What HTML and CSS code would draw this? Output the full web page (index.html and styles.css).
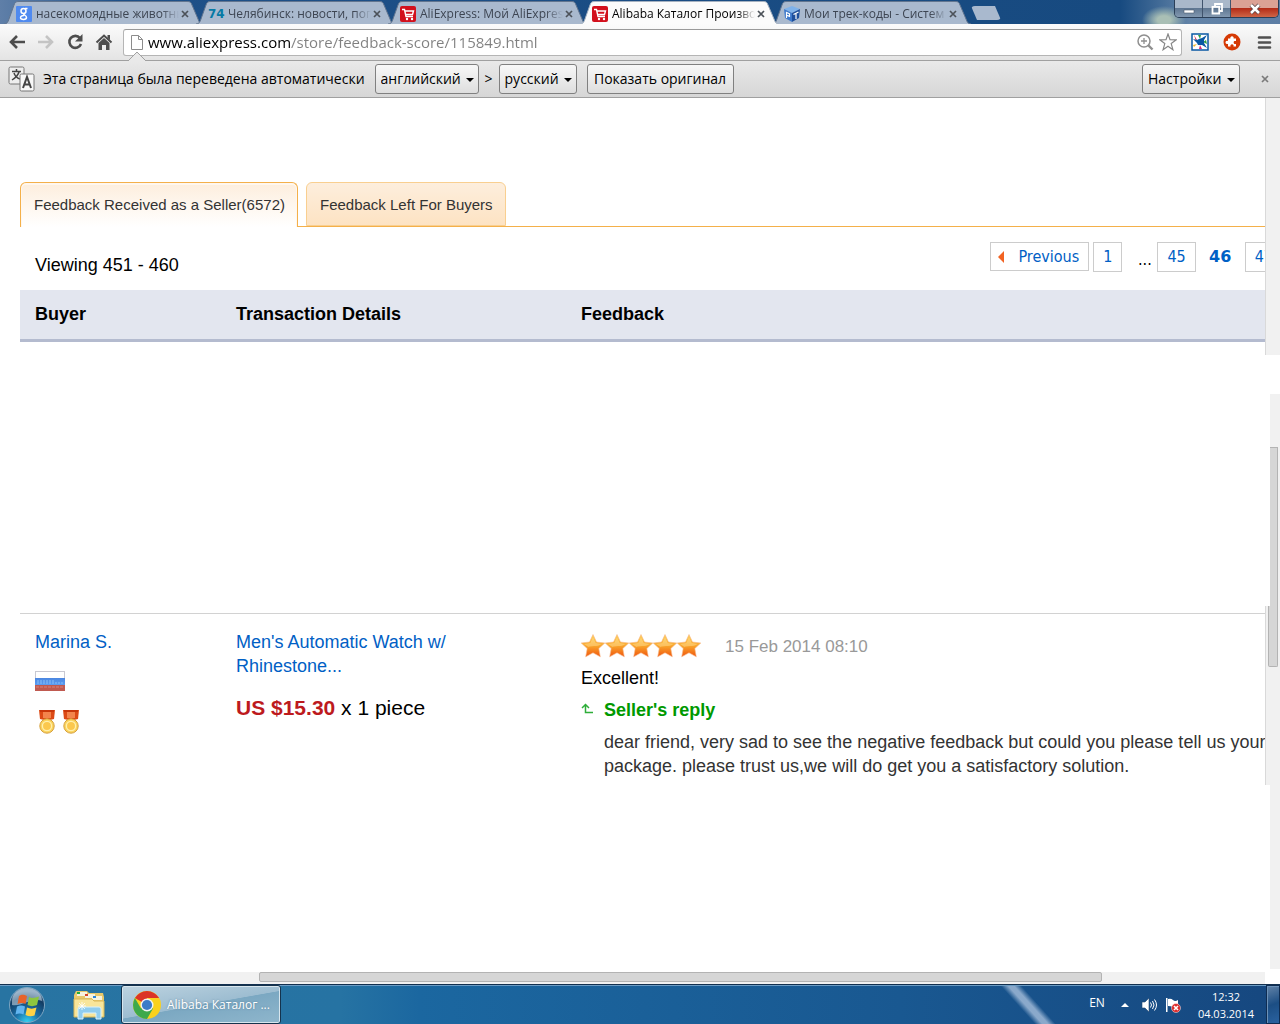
FILE: index.html
```html
<!DOCTYPE html>
<html lang="ru">

<head>
    <meta charset="UTF-8">
    <meta name="viewport" content="width=device-width, initial-scale=1.0">
    <title>Alibaba Каталог</title>
    <link rel="stylesheet" href="styles.css">
</head>

<body>
    <!-- shapes used more than once -->
    <svg class="defs" aria-hidden="true">
        <defs>
            <linearGradient id="starFill" x1="0" y1="0" x2="0" y2="1">
                <stop offset="0" stop-color="#ffd257" />
                <stop offset=".5" stop-color="#f9a62c" />
                <stop offset="1" stop-color="#f0560e" />
            </linearGradient>
            <linearGradient id="flagBlue" x1="0" y1="0" x2="0" y2="1">
                <stop offset="0" stop-color="#4a86e0" />
                <stop offset="1" stop-color="#5c9df2" />
            </linearGradient>
            <radialGradient id="orb" cx=".5" cy="1" r=".9">
                <stop offset="0" stop-color="#35d6f5" />
                <stop offset=".4" stop-color="#1b6fa6" />
                <stop offset=".8" stop-color="#123c63" />
                <stop offset="1" stop-color="#5c7f9f" />
            </radialGradient>
        </defs>
        <symbol id="tabShape" viewBox="0 0 199 24" preserveAspectRatio="none">
            <path d="M0 24 C3 24 4 22 5 19 L10 5 C11 2 12 1.500 15 1.500 H183 C186 1.500 187 2 188 5 L194 19 C195 22 196 24 199 24" />
        </symbol>
        <symbol id="cart" viewBox="0 0 16 16">
            <rect width="16" height="16" rx="2" fill="#d2101c" />
            <path d="M2 3.500h2.500l1.500 7h7M5 5h8.500l-1 3.500H5.700" fill="none" stroke="#fff" stroke-width="1.400" />
            <circle cx="7" cy="13" r="1.200" fill="#fff" />
            <circle cx="12" cy="13" r="1.200" fill="#fff" />
        </symbol>
        <symbol id="cross" viewBox="0 0 8 8">
            <path d="M1 1l6 6M7 1l-6 6" fill="none" stroke="currentColor" stroke-width="1.700" />
        </symbol>
        <symbol id="star" viewBox="0 0 24 24">
            <path d="M12 .500l3.500 7.500 8.300 1-6 5.500 1.500 8.300-7.300-4-7.300 4 1.500-8.300-6-5.500 8.300-1z" fill="url(#starFill)" stroke="#f6b98a" stroke-width=".6" />
            <path d="M12 3l2.700 6 6 .9c-5 3.600-10 .6-16 4L7.500 13 3 10l6.300-1z" fill="#ffe3a0" opacity=".45" />
        </symbol>
        <symbol id="medal" viewBox="0 0 16 24">
            <path d="M0 0h16l-1 9-4 1H5L1 9z" fill="#dc4a15" />
            <path d="M4 2h8v6H4z" fill="#f3844c" />
            <path d="M1 1h14" stroke="#c23208" stroke-width="1.500" />
            <circle cx="8" cy="16" r="7.200" fill="#fbd45c" stroke="#d6a03e" />
            <circle cx="8" cy="16" r="4.600" fill="#fbc84d" stroke="#fff0ae" stroke-width="1.300" />
        </symbol>
    </svg>

    <header class="browser">
        <div class="titlebar">
            <nav class="tabs">
                <div class="tab">
                    <svg class="shape"><use href="#tabShape" /></svg>
                    <svg class="favicon" viewBox="0 0 16 16">
                        <rect width="16" height="16" rx="1" fill="#4f8af0" />
                        <g fill="none" stroke="#fff" stroke-width="1.500">
                            <circle cx="7.500" cy="5" r="2.500" />
                            <path d="M9 2.500h2.500M8.500 7.500C6 9 10.500 9 10.500 11.500S4.500 14 4.500 11.700 8 9.500 8 9.500" />
                        </g>
                    </svg>
                    <a href="#">насекомоядные животны</a>
                    <button class="close" aria-label="Закрыть"><svg><use href="#cross" /></svg></button>
                </div>
                <div class="tab">
                    <svg class="shape"><use href="#tabShape" /></svg>
                    <b class="favicon favicon74">74</b>
                    <a href="#">Челябинск: новости, пог</a>
                    <button class="close" aria-label="Закрыть"><svg><use href="#cross" /></svg></button>
                </div>
                <div class="tab">
                    <svg class="shape"><use href="#tabShape" /></svg>
                    <svg class="favicon"><use href="#cart" /></svg>
                    <a href="#">AliExpress: Мой AliExpress</a>
                    <button class="close" aria-label="Закрыть"><svg><use href="#cross" /></svg></button>
                </div>
                <div class="tab active">
                    <svg class="shape"><use href="#tabShape" /></svg>
                    <svg class="favicon"><use href="#cart" /></svg>
                    <a href="#">Alibaba Каталог Произво</a>
                    <button class="close" aria-label="Закрыть"><svg><use href="#cross" /></svg></button>
                </div>
                <div class="tab">
                    <svg class="shape"><use href="#tabShape" /></svg>
                    <svg class="favicon" viewBox="0 0 16 16">
                        <path d="M8 0l8 3-8 4-8-4z" fill="#7fb2ea" />
                        <path d="M0 3l8 4v9l-7-4z" fill="#3b78cc" />
                        <path d="M16 3L8 7v9l7-4z" fill="#1d4f9c" />
                        <path d="M2.500 12V6.500l3 1.300v2.500l-3-1M9.500 8.500l5-2.500M12 7.500v5.500" fill="none" stroke="#fff" stroke-width="1.200" />
                    </svg>
                    <a href="#">Мои трек-коды - Систем</a>
                    <button class="close" aria-label="Закрыть"><svg><use href="#cross" /></svg></button>
                </div>
                <button class="newTab" aria-label="Новая вкладка"></button>
            </nav>
            <div class="windowControls">
                <button aria-label="Свернуть"><svg viewBox="0 0 12 12"><path d="M1 7h10v3H1z" fill="#fff" stroke="#4a5a70" stroke-width=".6" /></svg></button>
                <button aria-label="Развернуть"><svg viewBox="0 0 12 12"><path d="M4 3V1h7v7H9M1.500 3.800h6.700v6.700H1.500z" fill="none" stroke="#fff" stroke-width="1.800" /></svg></button>
                <button class="exit" aria-label="Закрыть окно"><svg viewBox="0 0 12 12"><path d="M2 2l8 8M10 2l-8 8" stroke="#5a4444" stroke-width="4" /><path d="M2 2l8 8M10 2l-8 8" stroke="#fff" stroke-width="2.500" /></svg></button>
            </div>
        </div>

        <div class="toolbar">
            <button class="tool" aria-label="Назад"><svg viewBox="0 0 18 18"><path d="M9 3L3 9l6 6M3 9h14" fill="none" stroke="#4d4d4d" stroke-width="2.600" /></svg></button>
            <button class="tool" aria-label="Вперёд"><svg viewBox="0 0 18 18"><path d="M9 3l6 6-6 6M15 9H1" fill="none" stroke="#c4c4c4" stroke-width="2.600" /></svg></button>
            <button class="tool" aria-label="Обновить"><svg viewBox="0 0 18 18"><path d="M14 5A6 6 0 1 0 15 11" fill="none" stroke="#4d4d4d" stroke-width="2.600" /><path d="M16.500 1v7.500H9z" fill="#4d4d4d" /></svg></button>
            <button class="tool" aria-label="Домой"><svg viewBox="0 0 18 18"><path d="M1.500 9.500L9 2.500l7.500 7" fill="none" stroke="#4d4d4d" stroke-width="2" /><path d="M12.500 2H15v5l-2.500-2zM3.500 10L9 5l5.500 5v7H11v-5H7v5H3.500z" fill="#4d4d4d" /></svg></button>
            <div class="omnibox">
                <svg class="pageIcon" viewBox="0 0 12 15"><path d="M.5.500h7l4 4v10H.500zM7.500.500v4h4" fill="#fff" stroke="#8c8c8c" /></svg>
                <input class="url" type="text" aria-label="Адрес" value="www.aliexpress.com/store/feedback-score/115849.html">
                <button class="tool" aria-label="Масштаб"><svg viewBox="0 0 18 18"><circle cx="8" cy="8" r="6" fill="none" stroke="#8f8f8f" stroke-width="1.500" /><path d="M5 8h6M8 5v6" stroke="#8f8f8f" stroke-width="1.300" /><path d="M12 12l4.500 4.500" stroke="#8f8f8f" stroke-width="2.400" /></svg></button>
                <button class="tool" aria-label="В закладки"><svg viewBox="0 0 18 18"><path d="M9 1l2 5.700 6 .2-4.800 3.700 1.700 6.100L9 13.200l-4.900 3.500 1.700-6.100L1 6.900l6-.2z" fill="#fff" stroke="#858585" stroke-width="1.200" /></svg></button>
                <svg class="notch" viewBox="0 0 18 10"><path d="M0 10l9-9 9 9" fill="#e9e9e9" stroke="#a0a0a0" /></svg>
            </div>
            <button class="ext" aria-label="Расширение"><svg viewBox="0 0 18 18">
                <rect x="1" y="1" width="16" height="16" fill="#fff" stroke="#0a58a4" stroke-width="1.500" />
                <path d="M3 2l3 5-1 1z" fill="#d51d45" /><path d="M7 2l2 4 1-4z" fill="#31a048" /><path d="M2 12l4-1-3 3z" fill="#eeb529" /><path d="M9 12l-1 4h3z" fill="#d5287a" /><path d="M15 7l-3 2 4 2z" fill="#31a048" />
                <path d="M2 6l4 1 2-1 3-1 5-3-3 5 0 3 3 5-5-3-4 0-1-2z" fill="#0a58a4" />
            </svg></button>
            <button class="ext" aria-label="Расширение"><svg viewBox="0 0 18 18">
                <circle cx="9" cy="9" r="8.500" fill="#d63a05" />
                <path d="M5 5.500h2.400a1.700 1.700 0 1 1 3.200 0H13v2.600a1.600 1.600 0 1 0 0 2.800V13.500h-2.600a1.600 1.600 0 1 0-2.800 0H5v-2.600a1.700 1.700 0 1 1 0-3z" fill="#fff" />
            </svg></button>
            <button class="ext" aria-label="Меню"><svg viewBox="0 0 18 18"><path d="M4 4.500h11M4 9.500h11M4 14.500h11" stroke="#505050" stroke-width="2.600" stroke-linecap="round" /></svg></button>
        </div>

        <div class="infobar">
            <svg class="translate" viewBox="0 0 28 26">
                <rect x="1" y="1" width="15" height="17" rx="1.500" fill="#eee" stroke="#777" />
                <path d="M4 5.500h9M8.500 3v2.500M11 6c-1 4-4 6-7 8M6 7c1 3 3 5 6 6" fill="none" stroke="#444" stroke-width="1.500" />
                <rect x="12" y="8" width="14" height="17" rx="1.500" fill="#f7f7f7" stroke="#777" />
                <path d="M15 22l4-11 4 11M16.500 18.500h5" fill="none" stroke="#444" stroke-width="2" />
            </svg>
            <span>Эта страница была переведена автоматически</span>
            <span class="drop from"><select aria-label="Язык оригинала"><option>английский</option></select></span>
            <span class="arrow">&gt;</span>
            <span class="drop to"><select aria-label="Язык перевода"><option>русский</option></select></span>
            <button class="original">Показать оригинал</button>
            <span class="drop settings"><select aria-label="Настройки"><option>Настройки</option></select></span>
            <button class="close" aria-label="Закрыть панель"><svg><use href="#cross" /></svg></button>
        </div>
    </header>

    <div class="viewport">
        <main>
            <nav class="feedbackTabs">
                <a class="current" href="#">Feedback Received as a Seller(6572)</a>
                <a href="#">Feedback Left For Buyers</a>
            </nav>
            <div class="listBar">
                <p>Viewing 451 - 460</p>
                <nav class="pager">
                    <a class="prev" href="#"><svg viewBox="0 0 6 12"><path d="M6 0v12L0 6z" fill="#f26322" /></svg>Previous</a>
                    <a href="#">1</a>
                    <span class="dots">...</span>
                    <a href="#">45</a>
                    <b>46</b>
                    <a class="next" href="#">47</a>
                </nav>
            </div>
            <table>
                <thead>
                    <tr>
                        <th class="buyer">Buyer</th>
                        <th class="details">Transaction Details</th>
                        <th>Feedback</th>
                    </tr>
                </thead>
                <tbody>
                    <tr class="blank">
                        <td colspan="3"></td>
                    </tr>
                    <tr class="entry">
                        <td>
                            <a href="#">Marina S.</a>
                            <svg class="flag" viewBox="0 0 30 20">
                                <rect width="30" height="20" fill="#c9c9d2" />
                                <path d="M1 1h28v6H1z" fill="#fff" />
                                <path d="M0 7h30v7H0z" fill="url(#flagBlue)" />
                                <path d="M0 14h30v6H0z" fill="#c05a50" />
                                <path d="M2 10h17M2 12h26" stroke="#86c0fa" stroke-dasharray="2 1" />
                                <path d="M1 16h28" stroke="#d98278" stroke-dasharray="3 1" />
                            </svg>
                            <div class="medals">
                                <svg><use href="#medal" /></svg>
                                <svg><use href="#medal" /></svg>
                            </div>
                        </td>
                        <td>
                            <a href="#">Men's Automatic Watch w/<br>Rhinestone...</a>
                            <p class="price"><b>US $15.30</b> x 1 piece</p>
                        </td>
                        <td>
                            <div class="rating">
                                <svg><use href="#star" /></svg><svg><use href="#star" /></svg><svg><use href="#star" /></svg><svg><use href="#star" /></svg><svg><use href="#star" /></svg>
                                <span class="date">15 Feb 2014 08:10</span>
                            </div>
                            <p>Excellent!</p>
                            <div class="reply">
                                <svg viewBox="0 0 12 12"><path d="M1 5l3.500-3.500L8 5M4.500 2v7.500H12" fill="none" stroke="#2fae3a" stroke-width="1.500" /></svg>
                                <div>
                                    <h4>Seller's reply</h4>
                                    <p>dear friend, very sad to see the negative feedback but could you please tell us your<br>package. please trust us,we will do get you a satisfactory solution.</p>
                                </div>
                            </div>
                        </td>
                    </tr>
                </tbody>
            </table>
        </main>
        <div class="vscroll">
            <div class="track wide first"></div>
            <div class="track second"><div class="thumb"></div></div>
            <div class="track wide third"><div class="thumb"></div></div>
            <div class="track last"></div>
        </div>
    </div>
    <div class="hscroll"><div class="thumb"></div></div>

    <footer class="taskbar">
        <button class="start" aria-label="Пуск"><svg viewBox="0 0 36 36">
            <circle cx="18" cy="18" r="17.500" fill="url(#orb)" stroke="#7ea6c2" />
            <path d="M3 14a15 13 0 0 1 30 0c-9-4-21 6-30 4z" fill="#d4e2ec" opacity=".55" />
            <path d="M10 9c3-2 5-1.500 8 0l-1.500 8c-3-1.500-5-1.500-8 0z" fill="#e8632a" />
            <path d="M20 10c3 1.500 6 1 10-.5L28 18c-4 1.500-6 1.500-9.500 0z" fill="#8dc63f" />
            <path d="M8 19.500c3-1.500 5-1.500 8 0l-1.500 8c-3-1.500-5-1.500-8 0z" fill="#62b5f0" />
            <path d="M18 20.500c3 1.500 6 1.500 9.500 0l-2 8c-3 1-6 1-9-.5z" fill="#fdd247" />
        </svg></button>
        <button class="explorer" aria-label="Проводник"><svg viewBox="0 0 32 30">
            <path d="M1 5l2-4h11l2 2h14l1 4v20H1z" fill="#e9c86b" />
            <path d="M4 2h10v4H4z" fill="#f7f3df" /><path d="M4 2h3v2H4z" fill="#25ad38" />
            <path d="M12 4h10v4H12z" fill="#f7f3df" /><path d="M12 4h3v2h-3z" fill="#d7422c" />
            <path d="M19 6h10v4H19z" fill="#f7f3df" /><path d="M20 6h3v2h-3z" fill="#2a85dc" />
            <path d="M1 9h18l2 2h10v16H1z" fill="#f8e59a" stroke="#d7b658" />
            <path d="M5 29V19q0-2 2-2h19q2 0 2 2v10h-5v-6H10v6z" fill="#90cdef" stroke="#d8f1fc" />
            <path d="M9 12v8M5 16h8M6 13l6 6M12 13l-6 6" stroke="#fff" stroke-width=".8" />
        </svg></button>
        <button class="task">
            <svg viewBox="0 0 28 28">
                <circle cx="14" cy="14" r="14" fill="#fbd11d" />
                <path d="M14 14L1.900 7A14 14 0 0 1 26.100 7H14z" fill="#db3427" />
                <path d="M14 14L8 17.500 1.900 7A14 14 0 0 0 14 28l6-10.500z" fill="#3ea94b" />
                <circle cx="14" cy="14" r="6.500" fill="#f3f3f3" />
                <circle cx="14" cy="14" r="5.100" fill="#3b7bc8" />
            </svg>
            Alibaba Каталог ...
        </button>
        <span class="lang">EN</span>
        <svg class="trayUp" viewBox="0 0 8 4"><path d="M0 4l4-4 4 4z" fill="#fff" /></svg>
        <svg class="tray" viewBox="0 0 16 16"><path d="M1 5h3l4-4v14l-4-4H1z" fill="#fff" stroke="#21466f" stroke-width=".6" /><path d="M9.500 5.500q2 2.500 0 5M11.500 4q3 4 0 8M13.500 2.500q4 5.500 0 11" fill="none" stroke="#fff" /></svg>
        <svg class="tray" viewBox="0 0 16 16"><path d="M1 1h1.500v14H1z" fill="#fff" /><path d="M3 2q3-1 5 1t5 0v7q-3 1-5 0T3 9z" fill="#fff" /><circle cx="11" cy="11" r="4.500" fill="#dc2a2a" stroke="#fff" stroke-width=".5" /><path d="M9 9l4 4M13 9l-4 4" stroke="#fff" stroke-width="1.600" /></svg>
        <time class="clock">12:32<br>04.03.2014</time>
        <button class="desktop" aria-label="Рабочий стол"></button>
    </footer>
</body>

</html>
```
FILE: styles.css
```css
* {
    margin: 0;
    padding: 0;
    box-sizing: border-box;
}

body {
    display: flex;
    flex-direction: column;
    min-height: 100vh;
    background-color: #fff;
    color: #000;
    font-family: "Liberation Sans", Arial, sans-serif;
    font-size: 18px;
    line-height: 24px;
    overflow: hidden;
}

a {
    color: #0060c5;
    text-decoration: none;
}

button {
    display: flex;
    align-items: center;
    justify-content: center;
    border: 0;
    background: none;
    color: inherit;
    font: inherit;
    cursor: pointer;
}

svg {
    display: block;
    flex: none;
}

.defs {
    position: absolute;
    width: 0;
    height: 0;
}

/* browser window */
.browser,
.taskbar {
    font-family: "Open Sans", "Noto Sans", sans-serif;
    font-size: 14px;
}

.titlebar {
    display: flex;
    justify-content: space-between;
    height: 24px;
    padding: 0 1px 0 4px;
    background: radial-gradient(ellipse 22px 14px at 1164px 20px, #a9bfb5 30%, transparent), linear-gradient(90deg, #5f7fa8 0, #1e5088 120px, #174a80 1120px, #6384a8 1190px, #5d7ea5);
}

.tabs {
    display: flex;
    flex: 1;
    min-width: 0;
}

.tab {
    position: relative;
    display: flex;
    align-items: center;
    flex: 0 1 199px;
    min-width: 0;
    height: 24px;
    margin-right: -7px;
    padding: 3px 13px 0 12px;
    font-size: 12px;
    line-height: 20px;
}

.tab .shape {
    position: absolute;
    left: 0;
    top: 0;
    width: 100%;
    height: 24px;
    fill: #a9b9ce;
    stroke: #62758f;
}

.tab.active {
    z-index: 1;
}

.tab.active .shape {
    fill: #fbfbfb;
    stroke: #a5b1c0;
}

.favicon {
    position: relative;
    width: 16px;
    height: 16px;
    margin-right: 4px;
}

.favicon74 {
    color: #067aa5;
    font-family: "DejaVu Sans", sans-serif;
    font-size: 12px;
    line-height: 16px;
}

.tab a {
    position: relative;
    flex: 1;
    min-width: 0;
    overflow: hidden;
    white-space: nowrap;
    color: #3d4552;
    -webkit-mask-image: linear-gradient(90deg, #000 88%, transparent);
    mask-image: linear-gradient(90deg, #000 88%, transparent);
}

.tab.active a {
    color: #000;
}

.close {
    position: relative;
    width: 8px;
    height: 8px;
    color: #4c5259;
}

.tab .close {
    margin: 0 1px 0 2px;
}

.close svg {
    width: 8px;
    height: 8px;
}

.newTab {
    width: 30px;
    height: 14px;
    margin: 6px 0 0 7px;
    border-radius: 4px;
    background-color: #a9b9ce;
    clip-path: polygon(0 0, 24px 0, 100% 100%, 6px 100%);
}

.windowControls {
    display: flex;
    height: 18px;
    border: 1px solid #2b3f58;
    border-top: 0;
    border-radius: 0 0 5px 5px;
    overflow: hidden;
}

.windowControls button {
    width: 28px;
    border-right: 1px solid #40546d;
    background: linear-gradient(#a9b8ca 50%, #5f7792 50%, #8298b0);
}

.windowControls .exit {
    width: 47px;
    border-right: 0;
    background: linear-gradient(#dba194 50%, #b42c18 50%, #cf6546);
}

.windowControls svg {
    width: 12px;
    height: 12px;
}

.toolbar {
    display: flex;
    align-items: center;
    height: 37px;
    padding: 0 4px 0 8px;
    gap: 11px;
    border-bottom: 1px solid #a0a0a0;
    background: linear-gradient(#fbfbfb, #e4e4e4);
}

.tool,
.tool svg,
.ext,
.ext svg {
    width: 18px;
    height: 18px;
}

.omnibox {
    position: relative;
    display: flex;
    align-items: center;
    flex: 1;
    gap: 5px;
    height: 27px;
    margin-left: -1px;
    margin-right: -2px;
    padding: 0 4px 0 7px;
    border: 1px solid #b5b5b5;
    border-top-color: #999;
    border-radius: 3px;
    background-color: #fff;
}

.ext {
    margin-right: 3px;
}

.pageIcon {
    width: 12px;
    height: 15px;
}

.url {
    flex: 1;
    min-width: 0;
    border: 0;
    outline: 0;
    font: inherit;
    font-size: 15px;
    /* host is black, the path after it grey */
    background: linear-gradient(90deg, #000 143px, #808080 143px);
    -webkit-background-clip: text;
    background-clip: text;
    -webkit-text-fill-color: transparent;
}

.notch {
    position: absolute;
    left: 4px;
    bottom: -6px;
    width: 18px;
    height: 10px;
}

.infobar {
    display: flex;
    align-items: center;
    height: 37px;
    padding: 0 11px 0 8px;
    border-bottom: 1px solid #a0a0a0;
    background: linear-gradient(#e9e9e9, #d6d6d6);
    white-space: nowrap;
}

.translate {
    width: 28px;
    height: 26px;
    margin-right: 7px;
}

.drop {
    position: relative;
}

.drop::after {
    content: "";
    position: absolute;
    right: 5px;
    top: 14px;
    border: 4px solid transparent;
    border-top-color: #000;
    border-bottom: 0;
    pointer-events: none;
}

.drop select,
.original {
    width: 100%;
    height: 30px;
    padding: 0 5px;
    border: 1px solid #808080;
    border-radius: 3px;
    background: linear-gradient(#f8f8f8, #dedede);
    color: #000;
    font: inherit;
    appearance: none;
}

.from {
    width: 104px;
    margin-left: 10px;
}

.arrow {
    width: 20px;
    text-align: center;
}

.to {
    width: 78px;
}

.original {
    width: 147px;
    margin-left: 10px;
}

.settings {
    width: 98px;
    margin-left: auto;
}

.infobar .close {
    margin-left: 21px;
    color: #7a7a7a;
}

/* page */
.viewport {
    display: flex;
    flex: 1;
}

main {
    flex: 1;
    min-width: 0;
    padding: 84px 0 0 20px;
    overflow: hidden;
}

.feedbackTabs {
    display: flex;
    gap: 8px;
    height: 45px;
    border-bottom: 1px solid #f4b04a;
}

.feedbackTabs a {
    height: 44px;
    padding: 0 12px 0 13px;
    border: 1px solid #f9cf90;
    border-radius: 6px 6px 0 0;
    background: linear-gradient(#fdeedd, #fde3c3);
    color: #333;
    font-size: 15px;
    line-height: 44px;
}

.feedbackTabs .current {
    height: 45px;
    border-color: #f4b04a;
    border-bottom: 0;
    background: linear-gradient(#fdeedd, #fff);
    box-shadow: inset 0 1px 0 1px #fff7ee;
}

.listBar {
    display: flex;
    justify-content: space-between;
    height: 63px;
    padding: 15px 0 0 15px;
    white-space: nowrap;
}

.listBar p {
    padding-top: 11px;
}

.pager {
    display: flex;
    height: 30px;
    margin-right: -18px;
    color: #0060c5;
    font-family: "DejaVu Sans Condensed", "DejaVu Sans", sans-serif;
    font-size: 16px;
    line-height: 30px;
}

.pager a {
    display: flex;
    align-items: center;
    margin-right: 4px;
    padding: 0 9px;
    border: 1px solid #ccc;
}

.pager .prev {
    height: 29px;
    padding-left: 7px;
}

.pager .prev svg {
    width: 6px;
    height: 12px;
    margin-right: 14px;
}

.pager .dots {
    width: 31px;
    padding: 3px 0 0 6px;
    color: #000;
    text-align: center;
}

.pager b {
    width: 45px;
    padding-right: 4px;
    font-family: "DejaVu Sans", sans-serif;
    text-align: center;
}

.pager .next {
    margin-right: 0;
}

table {
    width: 100%;
    border-collapse: collapse;
    table-layout: fixed;
}

th {
    height: 50px;
    padding-left: 15px;
    border-bottom: 3px solid #b4bbcf;
    background-color: #e3e6ef;
    text-align: left;
}

.buyer {
    width: 201px;
}

.details {
    width: 345px;
}

.blank td {
    height: 273px;
}

.entry {
    border-top: 1px solid #d2d2d2;
}

.entry td {
    padding: 16px 0 0 15px;
    vertical-align: top;
    white-space: nowrap;
}

.flag {
    width: 30px;
    height: 20px;
    margin-top: 17px;
}

.medals {
    display: flex;
    gap: 8px;
    margin: 19px 0 0 4px;
}

.medals svg {
    width: 16px;
    height: 24px;
}

.price {
    margin-top: 18px;
    font-size: 21px;
}

.price b {
    color: #bd1a1d;
}

.rating {
    display: flex;
    align-items: center;
    margin: 4px 0 8px;
}

.rating svg {
    width: 24px;
    height: 24px;
}

.date {
    margin-left: 24px;
    padding-top: 2px;
    color: #999;
    font-size: 17px;
    line-height: 22px;
}

.reply {
    display: flex;
    margin-top: 8px;
    color: #333;
}

.reply svg {
    width: 12px;
    height: 12px;
    margin: 5px 11px 0 0;
}

.reply h4 {
    margin-bottom: 8px;
    color: #090;
    font-size: 18px;
}

/* scroll bars */
.vscroll {
    display: flex;
    flex-direction: column;
    align-items: flex-end;
    width: 15px;
}

.track {
    width: 10px;
    background-color: #f1f1f1;
}

.track.wide {
    width: 15px;
    border-left: 1px solid #d9d9d9;
}

.thumb {
    border: 1px solid #b3b3b3;
    background-color: #d6d6d6;
}

.first {
    height: 257px;
    margin-bottom: 39px;
}

.second {
    height: 212px;
    padding: 53px 2px 0 0;
}

.second .thumb {
    height: 159px;
    border-left: 0;
    border-bottom: 0;
}

.third {
    height: 179px;
    padding: 0 2px;
}

.third .thumb {
    height: 61px;
    border-top: 0;
    border-radius: 0 0 2px 2px;
}

.last {
    height: 184px;
}

.hscroll {
    height: 12px;
    margin-right: 15px;
    padding: 0 163px 2px 259px;
    background-color: #f1f1f1;
}

.hscroll .thumb {
    height: 10px;
    border-radius: 2px;
}

/* taskbar */
.taskbar {
    display: flex;
    align-items: center;
    height: 40px;
    padding-left: 9px;
    border-top: 1px solid #13304f;
    background: linear-gradient(48deg, transparent 42%, #8aa9cb 50%, #8aa9cb 56%, transparent 64%) 995px 0 / 60px 100% no-repeat, linear-gradient(90deg, #2874a2, #2673a3 340px, #1b67a0 420px, #195891 900px, #16477f);
    box-shadow: inset 0 1px 0 #6c9cc4;
    color: #fff;
    font-size: 12px;
    line-height: 17px;
    white-space: nowrap;
}

.start,
.start svg {
    width: 36px;
    height: 36px;
}

.explorer {
    margin: 0 16px 0 28px;
}

.explorer svg {
    width: 32px;
    height: 30px;
}

.task {
    justify-content: flex-start;
    gap: 6px;
    width: 160px;
    height: 39px;
    padding-left: 11px;
    border: 1px solid #15334d;
    border-radius: 3px;
    background: linear-gradient(170deg, #bdd3e0, #9dbdd1 50%, #7ba8c2 51%, #8fb6cc);
    box-shadow: inset 0 0 0 1px #d8e6ee;
    font-size: 12px;
    text-shadow: 0 0 2px #567e96;
}

.task svg {
    width: 28px;
    height: 28px;
}

.lang {
    margin: 0 16px 4px auto;
}

.trayUp {
    width: 8px;
    height: 4px;
    margin-right: 12px;
}

.tray {
    width: 16px;
    height: 16px;
    margin-right: 8px;
}

.clock {
    margin: 0 12px 0 9px;
    font-size: 11px;
    text-align: center;
}

.desktop {
    align-self: stretch;
    width: 14px;
    border: 1px solid #0e2c52;
    background: linear-gradient(160deg, #6283a8, #1c4e84 50%, #2a62a0);
    box-shadow: inset 1px 1px 0 #6d92b8;
}
```
